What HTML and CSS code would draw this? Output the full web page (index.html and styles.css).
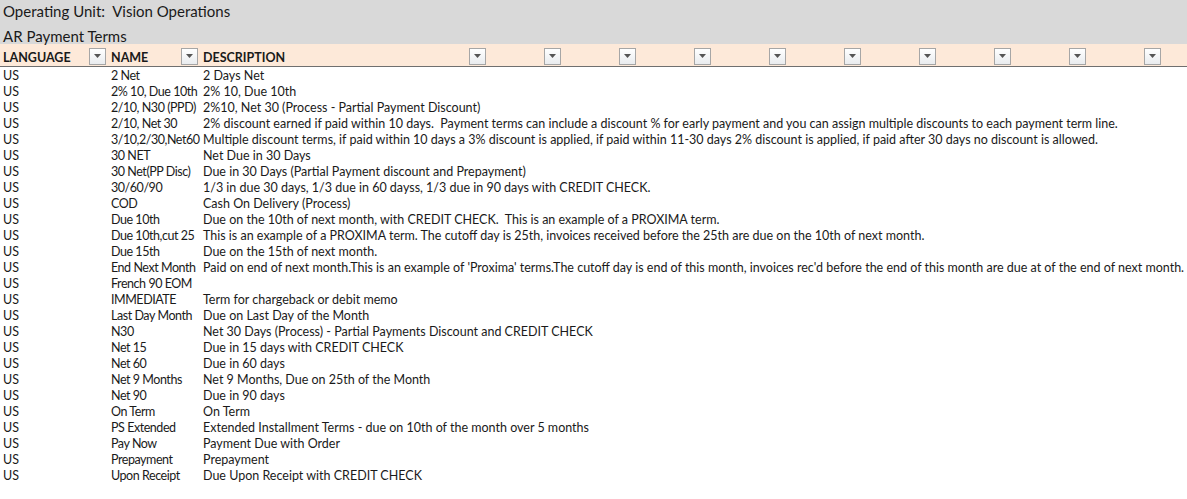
FILE: index.html
```html
<!DOCTYPE html>
<html>
<head>
<meta charset="utf-8">
<link rel="stylesheet" href="styles.css">
</head>
<body>
<div class="sheet">
  <div class="band">
    <div class="title">Operating Unit:&nbsp; Vision Operations</div>
    <div class="title second">AR Payment Terms</div>
  </div>
  <div class="head">
    <div class="hcell"><span class="hl">LANGUAGE</span><i class="fb"><svg width="7" height="4" viewBox="0 0 7 4"><path d="M0 0H7L3.5 4Z" fill="#555"/></svg></i></div>
    <div class="hcell"><span class="hl">NAME</span><i class="fb"><svg width="7" height="4" viewBox="0 0 7 4"><path d="M0 0H7L3.5 4Z" fill="#555"/></svg></i></div>
    <div class="hcell"><span class="hl">DESCRIPTION</span><i class="fb"><svg width="7" height="4" viewBox="0 0 7 4"><path d="M0 0H7L3.5 4Z" fill="#555"/></svg></i></div>
    <div class="hcell"><i class="fb"><svg width="7" height="4" viewBox="0 0 7 4"><path d="M0 0H7L3.5 4Z" fill="#555"/></svg></i></div>
    <div class="hcell"><i class="fb"><svg width="7" height="4" viewBox="0 0 7 4"><path d="M0 0H7L3.5 4Z" fill="#555"/></svg></i></div>
    <div class="hcell"><i class="fb"><svg width="7" height="4" viewBox="0 0 7 4"><path d="M0 0H7L3.5 4Z" fill="#555"/></svg></i></div>
    <div class="hcell"><i class="fb"><svg width="7" height="4" viewBox="0 0 7 4"><path d="M0 0H7L3.5 4Z" fill="#555"/></svg></i></div>
    <div class="hcell"><i class="fb"><svg width="7" height="4" viewBox="0 0 7 4"><path d="M0 0H7L3.5 4Z" fill="#555"/></svg></i></div>
    <div class="hcell"><i class="fb"><svg width="7" height="4" viewBox="0 0 7 4"><path d="M0 0H7L3.5 4Z" fill="#555"/></svg></i></div>
    <div class="hcell"><i class="fb"><svg width="7" height="4" viewBox="0 0 7 4"><path d="M0 0H7L3.5 4Z" fill="#555"/></svg></i></div>
    <div class="hcell"><i class="fb"><svg width="7" height="4" viewBox="0 0 7 4"><path d="M0 0H7L3.5 4Z" fill="#555"/></svg></i></div>
    <div class="hcell"><i class="fb"><svg width="7" height="4" viewBox="0 0 7 4"><path d="M0 0H7L3.5 4Z" fill="#555"/></svg></i></div>
    <div class="hcell"></div>
  </div>
  <div class="rows">
    <div class="row"><span>US</span><span class="nm">2 Net</span><span>2 Days Net</span></div>
    <div class="row"><span>US</span><span class="nm">2% 10, Due 10th</span><span>2% 10, Due 10th</span></div>
    <div class="row"><span>US</span><span class="nm">2/10, N30 (PPD)</span><span>2%10, Net 30 (Process - Partial Payment Discount)</span></div>
    <div class="row"><span>US</span><span class="nm">2/10, Net 30</span><span>2% discount earned if paid within 10 days.&nbsp; Payment terms can include a discount % for early payment and you can assign multiple discounts to each payment term line.</span></div>
    <div class="row"><span>US</span><span class="nm">3/10,2/30,Net60</span><span>Multiple discount terms, if paid within 10 days a 3% discount is applied, if paid within 11-30 days 2% discount is applied, if paid after 30 days no discount is allowed.</span></div>
    <div class="row"><span>US</span><span class="nm">30 NET</span><span>Net Due in 30 Days</span></div>
    <div class="row"><span>US</span><span class="nm">30 Net(PP Disc)</span><span>Due in 30 Days (Partial Payment discount and Prepayment)</span></div>
    <div class="row"><span>US</span><span class="nm">30/60/90</span><span>1/3 in due 30 days, 1/3 due in 60 dayss, 1/3 due in 90 days with CREDIT CHECK.</span></div>
    <div class="row"><span>US</span><span class="nm">COD</span><span>Cash On Delivery (Process)</span></div>
    <div class="row"><span>US</span><span class="nm">Due 10th</span><span>Due on the 10th of next month, with CREDIT CHECK.&nbsp; This is an example of a PROXIMA term.</span></div>
    <div class="row"><span>US</span><span class="nm">Due 10th,cut 25</span><span>This is an example of a PROXIMA term. The cutoff day is 25th, invoices received before the 25th are due on the 10th of next month.</span></div>
    <div class="row"><span>US</span><span class="nm">Due 15th</span><span>Due on the 15th of next month.</span></div>
    <div class="row"><span>US</span><span class="nm">End Next Month</span><span>Paid on end of next month.This is an example of 'Proxima' terms.The cutoff day is end of this month, invoices rec'd before the end of this month are due at of the end of next month.</span></div>
    <div class="row"><span>US</span><span class="nm">French 90 EOM</span><span></span></div>
    <div class="row"><span>US</span><span class="nm">IMMEDIATE</span><span>Term for chargeback or debit memo</span></div>
    <div class="row"><span>US</span><span class="nm">Last Day Month</span><span>Due on Last Day of the Month</span></div>
    <div class="row"><span>US</span><span class="nm">N30</span><span>Net 30 Days (Process) - Partial Payments Discount and CREDIT CHECK</span></div>
    <div class="row"><span>US</span><span class="nm">Net 15</span><span>Due in 15 days with CREDIT CHECK</span></div>
    <div class="row"><span>US</span><span class="nm">Net 60</span><span>Due in 60 days</span></div>
    <div class="row"><span>US</span><span class="nm">Net 9 Months</span><span>Net 9 Months, Due on 25th of the Month</span></div>
    <div class="row"><span>US</span><span class="nm">Net 90</span><span>Due in 90 days</span></div>
    <div class="row"><span>US</span><span class="nm">On Term</span><span>On Term</span></div>
    <div class="row"><span>US</span><span class="nm">PS Extended</span><span>Extended Installment Terms - due on 10th of the month over 5 months</span></div>
    <div class="row"><span>US</span><span class="nm">Pay Now</span><span>Payment Due with Order</span></div>
    <div class="row"><span>US</span><span class="nm">Prepayment</span><span>Prepayment</span></div>
    <div class="row"><span>US</span><span class="nm">Upon Receipt</span><span>Due Upon Receipt with CREDIT CHECK</span></div>
  </div>
</div>
</body>
</html>
```

FILE: styles.css
```css
html, body {
  margin: 0;
  padding: 0;
  background: #ffffff;
}
.sheet {
  width: 1187px;
  font-family: Lato, "Liberation Sans", sans-serif;
  color: #1a1a1a;
}
.band {
  background: #d9d9d9;
  height: 44px;
  display: flex;
  flex-direction: column;
}
.title {
  height: 22px;
  line-height: 22px;
  font-size: 15px;
  padding-left: 3px;
  white-space: nowrap;
}
.title.second {
  line-height: 28px;
}
.head {
  display: grid;
  grid-template-columns: 108px 92px 288px repeat(9, 75px) 1fr;
  height: 22px;
  background: #fde9d9;
  border-bottom: 1px solid #6f6f6f;
}
.hcell {
  display: flex;
  align-items: center;
  padding: 0 2px 0 3px;
  font-weight: bold;
  font-size: 12.5px;
  white-space: nowrap;
}
.hl {
  padding-top: 5px;
}
.fb {
  width: 15px;
  height: 15px;
  border: 1px solid #a6a6a6;
  background: linear-gradient(#ffffff, #e9ecef);
  display: flex;
  align-items: center;
  justify-content: center;
  margin-left: auto;
  margin-top: 2px;
}
.fb svg {
  display: block;
}
.rows {
  display: flex;
  flex-direction: column;
  padding-top: 1px;
}
.row {
  display: grid;
  grid-template-columns: 108px 92px 1fr;
  height: 16px;
  line-height: 16px;
  font-size: 12.5px;
  white-space: nowrap;
}
.row span {
  padding-left: 3px;
  overflow: visible;
}
.row .nm {
  letter-spacing: -0.45px;
}
```
